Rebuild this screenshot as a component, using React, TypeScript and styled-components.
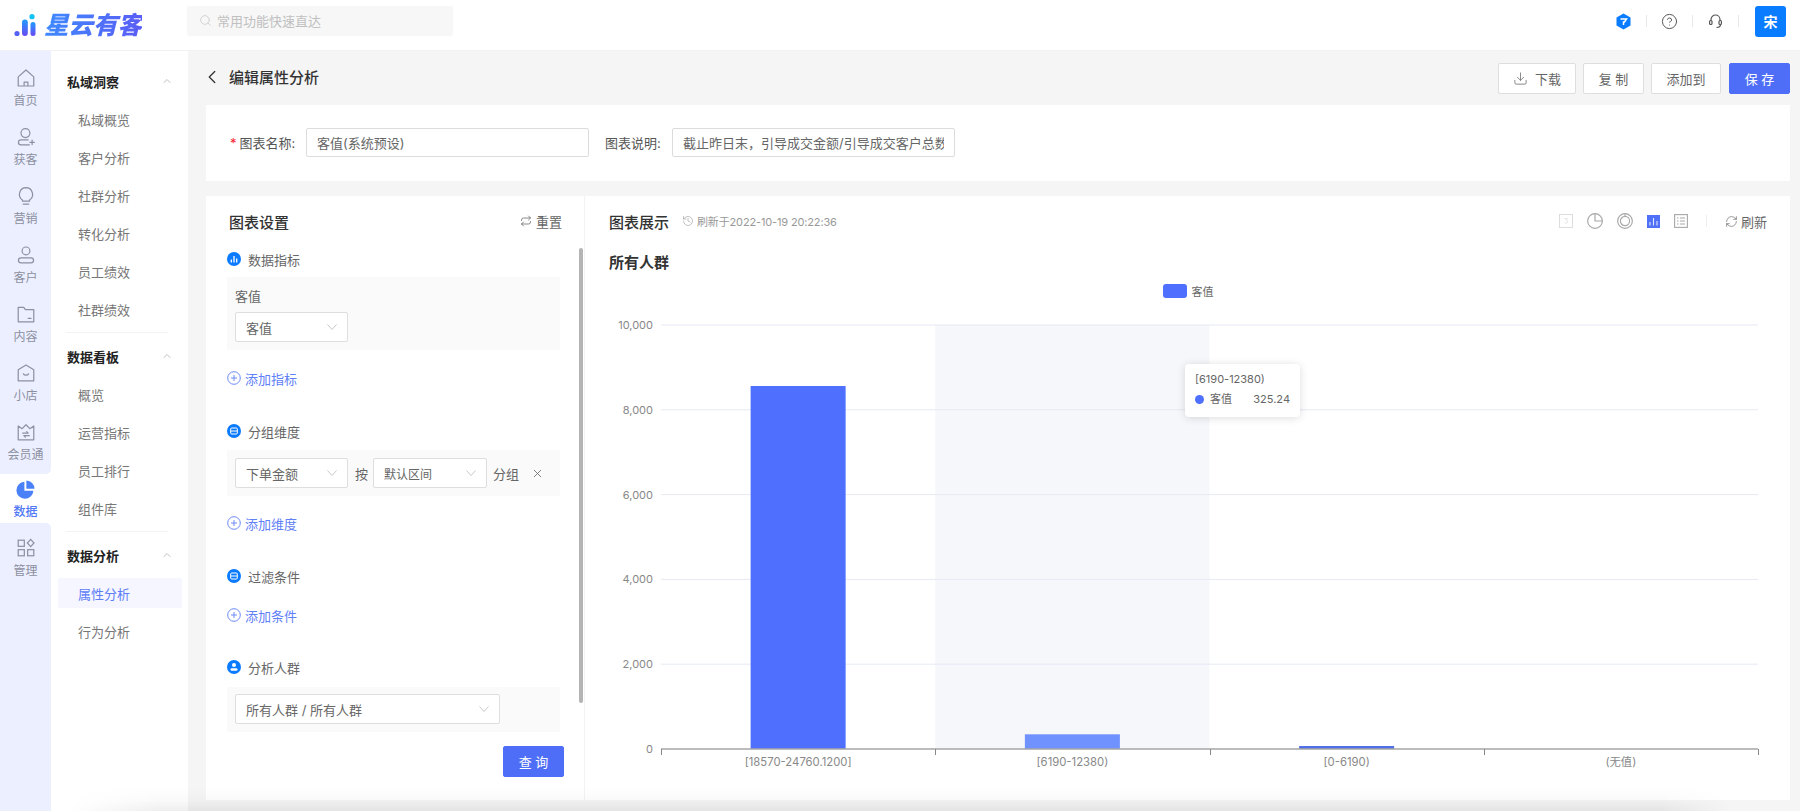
import React from 'react';
import styled, { createGlobalStyle } from 'styled-components';
import { ChevronLeft, ChevronUp, Search, X, Download, CircleHelp, RefreshCw, Repeat, History } from 'lucide-react';

const GlobalStyle = createGlobalStyle`
  html, body {
    margin: 0;
    padding: 0;
    background: #f5f5f5;
  }
  * {
    box-sizing: border-box;
  }
  body {
    font-family: Inter, "Noto Sans CJK SC", "Noto Sans", sans-serif;
    font-size: 13px;
    color: #555;
  }
`;

const Page = styled.div`
  position: relative;
  width: 1800px;
  height: 811px;
  display: flex;
  flex-direction: column;
  overflow: hidden;
`;

const BottomShade = styled.div`
  position: absolute;
  left: 70px;
  right: 70px;
  bottom: 0;
  height: 24px;
  pointer-events: none;
  background: linear-gradient(to bottom, rgba(0, 0, 0, 0), rgba(0, 0, 0, 0.02) 55%, rgba(0, 0, 0, 0.065));
  mask-image: linear-gradient(to right, transparent, #000 90px, #000 calc(100% - 70px), transparent);
`;

/* top bar */
const TopBar = styled.header`
  flex: 0 0 51px;
  display: flex;
  align-items: center;
  background: #fff;
  border-bottom: 1px solid #f2f2f2;
  padding-left: 14px;
`;

const Logo = styled.div`
  width: 173px;
  display: flex;
  align-items: center;
  gap: 8px;
`;

const LogoText = styled.span`
  font-size: 24.5px;
  line-height: 30px;
  font-weight: 900;
  font-style: italic;
  background: linear-gradient(100deg, #3d8bff, #5b5cf6);
  -webkit-background-clip: text;
  background-clip: text;
  color: transparent;
`;

const SearchBox = styled.div`
  width: 266px;
  height: 30px;
  margin-top: -9px;
  display: flex;
  align-items: center;
  gap: 5px;
  padding-left: 12px;
  background: #f7f7f7;
  border-radius: 2px;
  color: #c0c0c0;
  font-size: 13px;
`;

const TopRight = styled.div`
  margin-left: auto;
  margin-top: -8px;
  display: flex;
  align-items: center;
  padding-right: 14px;
`;

const TopIcon = styled.div`
  width: 45px;
  display: flex;
  justify-content: center;
  color: #555;
`;

const TopDivider = styled.span`
  width: 1px;
  height: 12px;
  background: #e8e8e8;
`;

const Avatar = styled.div`
  width: 31px;
  height: 31px;
  margin-left: 16px;
  border-radius: 3px;
  background: #0a7cff;
  color: #fff;
  font-size: 14px;
  font-weight: 600;
  display: flex;
  align-items: center;
  justify-content: center;
`;

const Body = styled.div`
  flex: 1;
  min-height: 0;
  display: flex;
`;

/* icon rail */
const Rail = styled.nav`
  flex: 0 0 51px;
  display: flex;
  flex-direction: column;
  background: #fff;
`;

const RailGroup = styled.div<{ $last?: boolean }>`
  background: #ebefff;
  display: flex;
  flex-direction: column;
  gap: 10px;
  padding: ${(p) => (p.$last ? '9px 0 0' : '11px 0 9px')};
  border-radius: ${(p) => (p.$last ? '0 5px 0 0' : '0 0 5px 0')};
  flex: ${(p) => (p.$last ? 1 : 'none')};
`;

const RailItem = styled.a<{ $active?: boolean }>`
  height: 49px;
  padding-top: 6px;
  display: flex;
  flex-direction: column;
  align-items: center;
  gap: 5px;
  font-size: 12px;
  line-height: 16px;
  white-space: nowrap;
  color: ${(p) => (p.$active ? '#5178f6' : '#8d90a0')};
  font-weight: ${(p) => (p.$active ? 500 : 400)};
  svg {
    display: block;
  }
`;

/* second menu */
const Menu = styled.aside`
  flex: 0 0 137px;
  background: #fff;
  padding-top: 11px;
`;

const MenuTitle = styled.div`
  height: 38px;
  display: flex;
  align-items: center;
  justify-content: space-between;
  padding: 0 15px 0 16px;
  font-size: 13px;
  font-weight: 600;
  color: #222;
  svg {
    color: #aaa;
  }
`;

const MenuItem = styled.a<{ $active?: boolean }>`
  height: 38px;
  display: flex;
  align-items: center;
  position: relative;
  padding-left: 27px;
  font-size: 13px;
  color: ${(p) => (p.$active ? '#5d7ef7' : '#777')};
  z-index: 0;
  &::before {
    content: '';
    display: ${(p) => (p.$active ? 'block' : 'none')};
    position: absolute;
    z-index: -1;
    left: 7px;
    right: 6px;
    top: 4px;
    bottom: 4px;
    border-radius: 2px;
    background: #f5f6ff;
  }
`;

const MenuDivider = styled.div`
  height: 1px;
  margin: 4px 20px 4px 15px;
  background: #f3f3f3;
`;

/* content */
const Content = styled.main`
  flex: 1;
  min-width: 0;
  display: flex;
  flex-direction: column;
  padding: 0 10px 11px 18px;
  background: #f5f5f5;
`;

const PageHead = styled.div`
  flex: 0 0 54px;
  padding-top: 12px;
  display: flex;
  align-items: flex-start;
`;

const PageTitle = styled.div`
  height: 31px;
  margin-top: -2px;
  margin-left: -5px;
  display: flex;
  align-items: center;
  gap: 6px;
  font-size: 15px;
  font-weight: 500;
  color: #333;
`;

const HeadActions = styled.div`
  margin-left: auto;
  display: flex;
  gap: 7px;
  > :last-child {
    margin-left: 1px;
  }
`;

const Button = styled.button<{ $w: number; $primary?: boolean }>`
  width: ${(p) => p.$w}px;
  height: 31px;
  padding: 0;
  display: flex;
  align-items: center;
  justify-content: center;
  gap: 7px;
  font: inherit;
  font-size: 13px;
  border-radius: 2px;
  border: 1px solid ${(p) => (p.$primary ? '#4f6ef7' : '#dedede')};
  background: ${(p) => (p.$primary ? '#4f6ef7' : '#fff')};
  color: ${(p) => (p.$primary ? '#fff' : '#666')};
`;

const FormCard = styled.section`
  flex: 0 0 76px;
  display: flex;
  align-items: center;
  padding: 0 0 1px 24px;
  background: #fff;
  margin-bottom: 15px;
`;

const FormLabel = styled.label`
  flex: none;
  width: 76px;
  color: #555;
  font-size: 13px;
  white-space: nowrap;
  span {
    color: #f5222d;
    margin-right: 3px;
  }
`;

const PlainLabel = styled(FormLabel)`
  width: 67px;
  margin-left: 16px;
`;

const TextInput = styled.input`
  width: 283px;
  height: 29px;
  padding: 0 10px 0 10px;
  border: 1px solid #dcdcdc;
  border-radius: 2px;
  outline: none;
  font: inherit;
  font-size: 13px;
  color: #666;
`;

const MainCard = styled.section`
  flex: 1;
  min-height: 0;
  display: flex;
  background: #fff;
`;

const SettingsPanel = styled.div`
  position: relative;
  flex: 0 0 379px;
  padding: 15px 24px 0 21px;
  border-right: 1px solid #f3f3f3;
`;

const ScrollThumb = styled.div`
  position: absolute;
  top: 52px;
  right: 1px;
  width: 4px;
  height: 455px;
  border-radius: 2px;
  background: #b4b4b4;
`;

const PanelHead = styled.div`
  height: 20px;
  display: flex;
  align-items: center;
  justify-content: space-between;
  padding-left: 2px;
  margin-bottom: 18px;
`;

const PanelTitle = styled.div`
  font-size: 15px;
  font-weight: 500;
  color: #333;
`;

const Reset = styled.div`
  display: flex;
  align-items: center;
  gap: 4px;
  margin-right: -2px;
  font-size: 13px;
  color: #666;
`;

const SectionHead = styled.div<{ $top?: number }>`
  height: 20px;
  margin-top: ${(p) => p.$top ?? 0}px;
  display: flex;
  align-items: center;
  gap: 7px;
  font-size: 13px;
  color: #666;
`;

const SectionBlock = styled.div<{ $top?: number; $pad?: string }>`
  margin-top: ${(p) => p.$top ?? 8}px;
  padding: ${(p) => p.$pad ?? '8px'};
  background: #fafafa;
`;

const BlockLabel = styled.div`
  height: 20px;
  font-size: 13px;
  line-height: 20px;
  color: #666;
  margin: 1px 0 6px;
`;

const Row = styled.div`
  display: flex;
  align-items: center;
  font-size: 13px;
  color: #666;
`;

const SelectBox = styled.div<{ $w: number; $small?: boolean }>`
  flex: none;
  width: ${(p) => p.$w}px;
  height: 30px;
  padding: 0 11px 0 10px;
  display: flex;
  align-items: center;
  justify-content: space-between;
  background: #fff;
  border: 1px solid #dedede;
  border-radius: 2px;
  font-size: ${(p) => (p.$small ? 12 : 13)}px;
  color: #666;
  svg {
    color: #c4c4c4;
    margin-right: -1px;
  }
`;

const GroupSelect = styled(SelectBox)`
  margin-left: 5px;
`;

const RowText = styled.span<{ $left: number }>`
  margin-left: ${(p) => p.$left}px;
`;

const RemoveIcon = styled.span`
  margin-left: 12px;
  display: flex;
  color: #666;
`;

const AddLink = styled.a<{ $top: number }>`
  height: 20px;
  margin-top: ${(p) => p.$top}px;
  display: flex;
  align-items: center;
  gap: 4px;
  font-size: 13px;
  color: #5f80f8;
`;

const QueryRow = styled.div`
  margin-top: 14px;
  margin-right: -4px;
  display: flex;
  justify-content: flex-end;
`;

/* chart side */
const ChartPanel = styled.div`
  flex: 1;
  min-width: 0;
  padding: 15px 23px 0 24px;
`;

const ChartHead = styled.div`
  height: 20px;
  display: flex;
  align-items: center;
`;

const RefreshTime = styled.div`
  margin-left: 13px;
  display: flex;
  align-items: center;
  gap: 3px;
  font-size: 11px;
  color: #999;
  letter-spacing: -0.15px;
`;

const ChartTools = styled.div`
  margin-left: auto;
  display: flex;
  align-items: center;
  gap: 14px;
`;

const ToolDivider = styled.span`
  width: 1px;
  height: 12px;
  margin: 0 4px;
  background: #eee;
`;

const RefreshBtn = styled.div`
  display: flex;
  align-items: center;
  gap: 3px;
  font-size: 13px;
  color: #666;
`;

const GroupName = styled.div`
  height: 20px;
  margin-top: 22px;
  font-size: 15px;
  line-height: 20px;
  font-weight: 600;
  color: #333;
`;

const Legend = styled.div`
  height: 14px;
  margin-top: 11px;
  display: flex;
  align-items: center;
  justify-content: center;
  gap: 5px;
  font-size: 11px;
  color: #666;
`;

const LegendSwatch = styled.span`
  width: 24px;
  height: 14px;
  border-radius: 3px;
  background: #4f70ff;
`;

const ChartWrap = styled.div`
  position: relative;
  margin-top: 7px;
  svg {
    display: block;
  }
`;

const Tooltip = styled.div`
  position: absolute;
  left: 576px;
  top: 59px;
  width: 115px;
  height: 53px;
  padding: 6px 10px;
  background: #fff;
  border-radius: 4px;
  box-shadow: 0 1px 8px rgba(0, 0, 0, 0.14);
  font-size: 11px;
  line-height: 18px;
  color: #666;
`;

const TooltipRow = styled.div`
  margin-top: 2px;
  display: flex;
  align-items: center;
  gap: 6px;
`;

const TooltipDot = styled.span`
  width: 9px;
  height: 9px;
  border-radius: 50%;
  background: #4f70ff;
`;

const TooltipValue = styled.span`
  margin-left: auto;
`;

/* rail icons */
const RailIcon = ({ d }: { d: string }) => (
  <svg width="20" height="20" viewBox="0 0 18 18" fill="none" stroke="currentColor" strokeWidth="1.100" strokeLinejoin="round" strokeLinecap="round">
    <path d={d} />
  </svg>
);

const railItems = [
  { label: '首页', d: 'M2 8 9 1.800 16 8v8.200H2V8Zm5.300 8.200v-3.400h3.400v3.400' },
  { label: '获客', d: 'M8.500 1.500a4 4 0 1 1 0 8 4 4 0 0 1 0-8ZM11 11.500H4.500a2.300 2.300 0 0 0 0 4.600H12M12.500 13.800h4M14.500 11.800v4' },
  { label: '营销', d: 'M9 1.500a6 6 0 0 1 3.200 11v1.200H5.800v-1.200A6 6 0 0 1 9 1.500ZM6.500 16.300h5' },
  { label: '客户', d: 'M9 1.800a3.500 3.500 0 1 1 0 7 3.500 3.500 0 0 1 0-7ZM4.500 11.500h9a2.200 2.200 0 0 1 0 4.600h-9a2.200 2.200 0 0 1 0-4.600Z' },
  { label: '内容', d: 'M2 3h5l1.500 2H16v11H2V3Zm9 10h2.500' },
  { label: '小店', d: 'M9 1.800 16 6v10H2V6l7-4.200ZM6.700 9.800c.8 1.500 3.800 1.500 4.600 0' },
  { label: '会员通', d: 'M2 3.500 5.500 6 9 2.500 12.500 6 16 3.500V16H2V3.500ZM6 10h5l-1.400-1.300M12 12.300H7l1.400 1.300' },
];

const ManageIcon = () => (
  <svg width="20" height="20" viewBox="0 0 18 18" fill="none" stroke="currentColor" strokeWidth="1.100">
    <rect x="2" y="2" width="5.500" height="5.500" />
    <rect x="2" y="10.500" width="5.500" height="5.500" />
    <rect x="10.500" y="10.500" width="5.500" height="5.500" />
    <path d="M13.200 1.300 16.200 4.500 13.200 7.700 10.200 4.500Z" />
  </svg>
);

const PieIcon = () => (
  <svg width="19" height="19" viewBox="0 0 19 19" fill="#4a80f8">
    <path d="M8.400 1.800v9h9A8.500 8.500 0 1 1 8.400 1.800Z" />
    <path d="M10.400.5a8.300 8.300 0 0 1 8.100 8.300h-8.100V.5Z" />
  </svg>
);

const LogoMark = () => (
  <svg width="22" height="23" viewBox="0 0 22 23">
    <defs>
      <linearGradient id="logo-bar" x1="0" y1="0" x2="0" y2="1">
        <stop offset="0" stopColor="#1f9dff" />
        <stop offset="1" stopColor="#6a48f2" />
      </linearGradient>
    </defs>
    <circle cx="3" cy="19.500" r="2.600" fill="#5561f0" />
    <rect x="8" y="5.500" width="5.800" height="16.500" rx="2.900" fill="url(#logo-bar)" />
    <rect x="16.500" y="8" width="5" height="14" rx="2.500" fill="url(#logo-bar)" />
    <circle cx="18" cy="2.700" r="2.600" fill="#12c2f2" />
  </svg>
);

const HexIcon = () => (
  <svg width="15" height="17" viewBox="0 0 15 17">
    <path d="M7.500.5 14.500 4.500v8l-7 4-7-4v-8Z" fill="#0a7cff" />
    <path d="M4.500 6h6L8.500 9H7.500v3" stroke="#fff" strokeWidth="1.500" fill="none" />
  </svg>
);

const HeadsetIcon = () => (
  <svg width="13" height="15" viewBox="0 0 13 15" fill="none" stroke="#555" strokeWidth="1.200">
    <path d="M2 6.500V5.500a4.500 4.500 0 0 1 9 0v1" />
    <rect x=".6" y="6.500" width="2.400" height="4" rx="1" />
    <rect x="10" y="6.500" width="2.400" height="4" rx="1" />
    <path d="M11.500 10.500c0 2-1.500 3-4 3" />
  </svg>
);

type DotKind = 'bar' | 'box' | 'user';

const SectionDot = ({ kind }: { kind: DotKind }) => (
  <svg width="14" height="14" viewBox="0 0 14 14">
    <circle cx="7" cy="7" r="7" fill="#0a7aff" />
    {kind === 'bar' && <path d="M4.300 7.500v3M7 4v6.500M9.700 6.500v4" stroke="#fff" strokeWidth="1.300" />}
    {kind === 'box' && (
      <>
        <rect x="3.700" y="4" width="6.600" height="6" rx="1" fill="none" stroke="#fff" strokeWidth="1" />
        <path d="M3.700 7h6.600" stroke="#fff" strokeWidth="1" />
      </>
    )}
    {kind === 'user' && (
      <>
        <circle cx="7" cy="5" r="2" fill="#fff" />
        <rect x="3.500" y="8.200" width="7" height="2.500" rx="1.200" fill="#fff" />
      </>
    )}
  </svg>
);

const PlusCircle = () => (
  <svg width="14" height="14" viewBox="0 0 14 14" fill="none" stroke="#6d8bf8" strokeWidth="1">
    <circle cx="7" cy="7" r="6.300" />
    <path d="M4 7h6M7 4v6" />
  </svg>
);

const Chevron = ({ w = 10 }: { w?: number }) => (
  <svg width={w} height="6" viewBox="0 0 10 6" fill="none" stroke="currentColor" strokeWidth="0.900">
    <path d="M.5.500 5 5.500 9.500.500" />
  </svg>
);

const toolGrey = '#a8a8a8';

const ToolIcons = () => (
  <>
    <svg width="14" height="14" viewBox="0 0 14 14" fill="none" stroke="#ddd">
      <rect x=".5" y=".5" width="13" height="13" />
      <path d="M5.500 4.500h3l-1.500 2c1.500 0 1.800 1 1.500 2-.3.700-2 1-3 .2" strokeWidth=".8" />
    </svg>
    <svg width="16" height="16" viewBox="0 0 15 15" fill="none" stroke={toolGrey} strokeWidth="1.100">
      <circle cx="7.500" cy="7.500" r="6.900" />
      <path d="M7.500 .6v6.900h6.900" />
    </svg>
    <svg width="16" height="16" viewBox="0 0 15 15" fill="none" stroke={toolGrey}>
      <circle cx="7.500" cy="7.500" r="6.900" strokeWidth="1.100" />
      <circle cx="7.500" cy="7.500" r="4.300" strokeWidth="1.100" />
      <path d="M7.500 .6v2.600" />
    </svg>
    <svg width="13" height="13" viewBox="0 0 13 13">
      <rect width="13" height="13" fill="#4f70f7" />
      <path d="M3 7v3.500M6.500 3v7.500M10 6v4.500" stroke="#dfe6ff" strokeWidth="1.100" />
    </svg>
    <svg width="14" height="14" viewBox="0 0 14 14" fill="none" stroke={toolGrey} strokeWidth="1.100">
      <rect x=".6" y=".6" width="12.800" height="12.800" />
      <path d="M3 4h1.500M6 4h5M3 7h1.500M6 7h5M3 10h1.500M6 10h5" />
    </svg>
  </>
);

/* chart data, in px inside the svg */
const chart = {
  width: 1158,
  height: 494,
  left: 52,
  right: 1149,
  top: 20,
  base: 444,
};
const band = (chart.right - chart.left) / 4;
const yTicks = [0, 2000, 4000, 6000, 8000, 10000];
const categories = ['[18570-24760.1200]', '[6190-12380)', '[0-6190)', '(无值)'];
const bars = [
  { value: 8561, fill: '#4f70ff' },
  { value: 347, fill: '#7092ff' },
  { value: 70, fill: '#4f6de6' },
  { value: 0, fill: '#4f70ff' },
];
const yOf = (v: number) => chart.base - (v / 10000) * (chart.base - chart.top);

const BarChart = () => (
  <svg width={chart.width} height={chart.height} fontFamily='Inter, "Noto Sans CJK SC", sans-serif' fontSize="11.3" fill="#888">
    <rect x={chart.left + band} y={chart.top} width={band} height={chart.base - chart.top} fill="#f6f7fb" />
    {yTicks.map((t) => (
      <g key={t}>
        {t > 0 && <line x1={chart.left} x2={chart.right} y1={yOf(t)} y2={yOf(t)} stroke="#e6e9f3" />}
        <text x={44} y={yOf(t) + 4} textAnchor="end" fontSize="11">
          {t.toLocaleString('en-US')}
        </text>
      </g>
    ))}
    {bars.map((b, i) =>
      b.value > 0 ? (
        <rect
          key={i}
          x={chart.left + band * i + (band - 95) / 2}
          y={yOf(b.value)}
          width={95}
          height={chart.base - yOf(b.value)}
          fill={b.fill}
        />
      ) : null,
    )}
    <line x1={chart.left} x2={chart.right} y1={chart.base} y2={chart.base} stroke="#a6a6a6" strokeWidth="1.500" />
    {[0, 1, 2, 3, 4].map((i) => (
      <line
        key={i}
        x1={Math.round(chart.left + band * i) + 0.5}
        x2={Math.round(chart.left + band * i) + 0.5}
        y1={chart.base}
        y2={chart.base + 6}
        stroke="#888"
      />
    ))}
    {categories.map((c, i) => (
      <text key={c} x={chart.left + band * i + band / 2} y={chart.base + 17} textAnchor="middle">
        {c}
      </text>
    ))}
  </svg>
);

const MenuGroup = ({ title, items, active }: { title: string; items: string[]; active?: string }) => (
  <>
    <MenuTitle>
      {title}
      <ChevronUp size={12} strokeWidth={1.500} />
    </MenuTitle>
    {items.map((item) => (
      <MenuItem key={item} $active={item === active}>
        {item}
      </MenuItem>
    ))}
  </>
);

export default function App() {
  return (
    <Page>
      <GlobalStyle />
      <TopBar>
        <Logo>
          <LogoMark />
          <LogoText>星云有客</LogoText>
        </Logo>
        <SearchBox>
          <Search size={13} strokeWidth={1.200} />
          常用功能快速直达
        </SearchBox>
        <TopRight>
          <TopIcon>
            <HexIcon />
          </TopIcon>
          <TopDivider />
          <TopIcon>
            <CircleHelp size={17} strokeWidth={1.400} />
          </TopIcon>
          <TopDivider />
          <TopIcon>
            <HeadsetIcon />
          </TopIcon>
          <TopDivider />
          <Avatar>宋</Avatar>
        </TopRight>
      </TopBar>

      <Body>
        <Rail>
          <RailGroup>
            {railItems.map((item) => (
              <RailItem key={item.label}>
                <RailIcon d={item.d} />
                {item.label}
              </RailItem>
            ))}
          </RailGroup>
          <RailItem $active>
            <PieIcon />
            数据
          </RailItem>
          <RailGroup $last>
            <RailItem>
              <ManageIcon />
              管理
            </RailItem>
          </RailGroup>
        </Rail>

        <Menu>
          <MenuGroup title="私域洞察" items={['私域概览', '客户分析', '社群分析', '转化分析', '员工绩效', '社群绩效']} />
          <MenuDivider />
          <MenuGroup title="数据看板" items={['概览', '运营指标', '员工排行', '组件库']} />
          <MenuDivider />
          <MenuGroup title="数据分析" items={['属性分析', '行为分析']} active="属性分析" />
        </Menu>

        <Content>
          <PageHead>
            <PageTitle>
              <ChevronLeft size={22} strokeWidth={1.400} color="#333" />
              编辑属性分析
            </PageTitle>
            <HeadActions>
              <Button $w={78}>
                <Download size={15} strokeWidth={1.200} />
                下载
              </Button>
              <Button $w={61}>复 制</Button>
              <Button $w={70}>添加到</Button>
              <Button $w={61} $primary>
                保 存
              </Button>
            </HeadActions>
          </PageHead>

          <FormCard>
            <FormLabel>
              <span>*</span>图表名称:
            </FormLabel>
            <TextInput readOnly value="客值(系统预设)" />
            <PlainLabel>图表说明:</PlainLabel>
            <TextInput readOnly value="截止昨日末，引导成交金额/引导成交客户总数" />
          </FormCard>

          <MainCard>
            <SettingsPanel>
              <ScrollThumb />
              <PanelHead>
                <PanelTitle>图表设置</PanelTitle>
                <Reset>
                  <Repeat size={12} strokeWidth={1.500} />
                  重置
                </Reset>
              </PanelHead>

              <SectionHead>
                <SectionDot kind="bar" />
                数据指标
              </SectionHead>
              <SectionBlock>
                <BlockLabel>客值</BlockLabel>
                <Row>
                  <SelectBox $w={113}>
                    客值
                    <Chevron />
                  </SelectBox>
                </Row>
              </SectionBlock>
              <AddLink $top={18}>
                <PlusCircle />
                添加指标
              </AddLink>

              <SectionHead $top={33}>
                <SectionDot kind="box" />
                分组维度
              </SectionHead>
              <SectionBlock $top={9}>
                <Row>
                  <SelectBox $w={113}>
                    下单金额
                    <Chevron />
                  </SelectBox>
                  <RowText $left={7}>按</RowText>
                  <GroupSelect $w={114} $small>
                    默认区间
                    <Chevron />
                  </GroupSelect>
                  <RowText $left={6}>分组</RowText>
                  <RemoveIcon>
                    <X size={13} strokeWidth={1.500} />
                  </RemoveIcon>
                </Row>
              </SectionBlock>
              <AddLink $top={17}>
                <PlusCircle />
                添加维度
              </AddLink>

              <SectionHead $top={33}>
                <SectionDot kind="box" />
                过滤条件
              </SectionHead>
              <AddLink $top={19}>
                <PlusCircle />
                添加条件
              </AddLink>

              <SectionHead $top={32}>
                <SectionDot kind="user" />
                分析人群
              </SectionHead>
              <SectionBlock $top={10} $pad="7px 8px 8px">
                <Row>
                  <SelectBox $w={265}>
                    所有人群 / 所有人群
                    <Chevron />
                  </SelectBox>
                </Row>
              </SectionBlock>
              <QueryRow>
                <Button $w={61} $primary>
                  查 询
                </Button>
              </QueryRow>
            </SettingsPanel>

            <ChartPanel>
              <ChartHead>
                <PanelTitle>图表展示</PanelTitle>
                <RefreshTime>
                  <History size={12} strokeWidth={1.200} />
                  刷新于2022-10-19 20:22:36
                </RefreshTime>
                <ChartTools>
                  <ToolIcons />
                  <ToolDivider />
                  <RefreshBtn>
                    <RefreshCw size={13} strokeWidth={1.200} />
                    刷新
                  </RefreshBtn>
                </ChartTools>
              </ChartHead>
              <GroupName>所有人群</GroupName>
              <Legend>
                <LegendSwatch />
                客值
              </Legend>
              <ChartWrap>
                <BarChart />
                <Tooltip>
                  [6190-12380)
                  <TooltipRow>
                    <TooltipDot />
                    客值
                    <TooltipValue>325.24</TooltipValue>
                  </TooltipRow>
                </Tooltip>
              </ChartWrap>
            </ChartPanel>
          </MainCard>
        </Content>
      </Body>
      <BottomShade />
    </Page>
  );
}
